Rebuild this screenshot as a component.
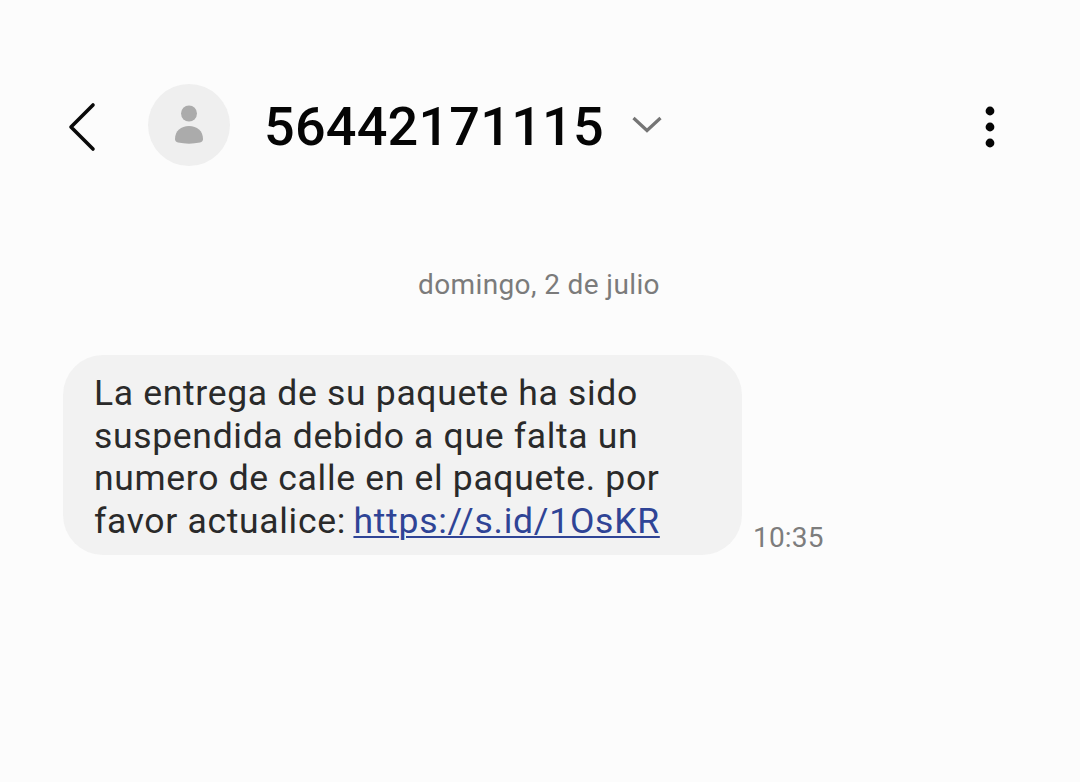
<style>
  :global(body) { margin: 0; background: #fcfcfc; }
  .screen {
    width: 1080px;
    height: 782px;
    overflow: hidden;
    background: #fcfcfc;
    font-family: Roboto, "Noto Sans", sans-serif;
    display: flex;
    flex-direction: column;
    box-sizing: border-box;
    padding-top: 84px;
  }
  .header {
    display: flex;
    align-items: center;
    height: 82px;
    padding-left: 68px;
    padding-right: 85px;
  }
  .back { width: 28px; height: 50px; display: block; transform: translateY(2px); }
  .avatar {
    width: 82px;
    height: 82px;
    border-radius: 50%;
    background: #efefef;
    margin-left: 52px;
    display: flex;
    align-items: center;
    justify-content: center;
    flex: none;
  }
  .avatar svg { width: 30px; height: 40px; display: block; }
  .title {
    margin-left: 34px;
    font-size: 54px;
    font-weight: 500;
    letter-spacing: 0.2px;
    color: #050505;
    line-height: 86px;
    height: 82px;
  }
  .chev { width: 30px; height: 17px; margin-left: 28px; display: block; transform: translateY(-1px); }
  .more { width: 10px; height: 42px; margin-left: auto; display: block; transform: translateY(2px); }
  .date {
    margin-top: 103px;
    padding-left: 418px;
    font-size: 28px;
    letter-spacing: 0.38px;
    line-height: 32px;
    color: #7b7b7b;
  }
  .row {
    margin-top: 54px;
    padding-left: 63px;
    display: flex;
    align-items: flex-end;
  }
  .bubble {
    width: 679px;
    height: 200px;
    box-sizing: border-box;
    padding: 17px 0 0 31px;
    background: #f2f2f2;
    border-radius: 40px;
    font-size: 35.5px;
    letter-spacing: 0.68px;
    line-height: 42.7px;
    color: #2a2a2a;
    white-space: nowrap;
  }
  .bubble a { color: #2f4496; margin-left: -2px; letter-spacing: 0.75px; text-decoration: underline; text-decoration-thickness: 2px; text-underline-offset: 3px; }
  .time {
    margin-left: 11px;
    font-size: 28px;
    letter-spacing: 0.2px;
    line-height: 32px;
    color: #7d7d7d;
    padding-bottom: 1px;
  }
</style>

<div class="screen">
  <header class="header">
    <svg class="back" viewBox="0 0 28 50" fill="none" stroke="#0a0a0a" stroke-width="3.6" stroke-linecap="round" stroke-linejoin="round"><path d="M25 3 L3 25 L25 47"/></svg>
    <div class="avatar">
      <svg viewBox="0 0 30 40" fill="#ababab"><circle cx="15" cy="8.5" r="8"/><path d="M1 34 C1 26 7 21 15 21 C23 21 29 26 29 34 C29 36 28 37 26 37.500 C19 39 11 39 4 37.500 C2 37 1 36 1 34 Z"/></svg>
    </div>
    <div class="title">56442171115</div>
    <svg class="chev" viewBox="0 0 30 17" fill="none" stroke="#757575" stroke-width="3.2" stroke-linecap="butt" stroke-linejoin="miter"><path d="M1.500 2 L15 14.500 L28.500 2"/></svg>
    <svg class="more" viewBox="0 0 10 42" fill="#050505"><circle cx="5" cy="5" r="4.4"/><circle cx="5" cy="21" r="4.4"/><circle cx="5" cy="37" r="4.4"/></svg>
  </header>
  <div class="date">domingo, 2 de julio</div>
  <div class="row">
    <div class="bubble">La entrega de su paquete ha sido<br/>suspendida debido a que falta un<br/>numero de calle en el paquete. por<br/>favor actualice: <a href="#top">https://s.id/1OsKR</a></div>
    <div class="time">10:35</div>
  </div>
</div>
